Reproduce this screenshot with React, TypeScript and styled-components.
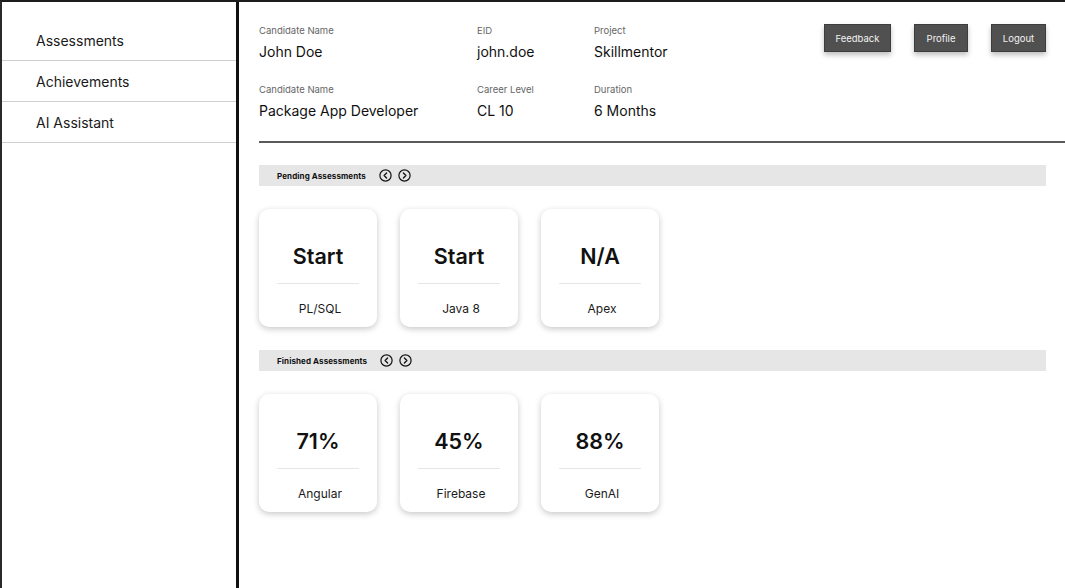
import React from "react";
import styled, { createGlobalStyle } from "styled-components";

const Global = createGlobalStyle`
  html, body { margin: 0; padding: 0; background: #fff; }
  body { font-family: Inter, "Noto Sans", sans-serif; color: #111; }
  * { box-sizing: border-box; }
`;

const Frame = styled.div`
  display: flex;
  width: 1065px;
  height: 588px;
  border-top: 2px solid #1c1c1c;
  border-left: 2px solid #2a2a2a;
  overflow: hidden;
`;

const Sidebar = styled.nav`
  width: 237px;
  flex-shrink: 0;
  border-right: 3px solid #111;
  padding-top: 18px;
  display: flex;
  flex-direction: column;
`;

const NavItem = styled.div`
  height: 41px;
  display: flex;
  align-items: center;
  padding-left: 34px;
  font-size: 14px;
  color: #1a1a1a;
  border-bottom: 1.5px solid #cfcfcf;
`;

const Main = styled.main`
  flex: 1;
  padding: 22px 19px 0 20px;
  display: flex;
  flex-direction: column;
`;

const Header = styled.div`
  display: flex;
  justify-content: space-between;
  align-items: flex-start;
`;

const InfoGrid = styled.div`
  display: grid;
  grid-template-columns: 218px 117px 150px;
  row-gap: 21px;
`;

const Field = styled.div`
  display: flex;
  flex-direction: column;
  gap: 4px;
`;

const Label = styled.span`
  font-size: 9.5px;
  line-height: 14px;
  color: #666;
`;

const Value = styled.span`
  font-size: 14px;
  line-height: 20px;
  color: #111;
`;

const Buttons = styled.div`
  display: flex;
  gap: 23px;
`;

const Btn = styled.button<{ $w: number }>`
  width: ${(p) => p.$w}px;
  height: 28px;
  border: 1px solid #3d3d3d;
  background: #505050;
  color: #f2f2f2;
  font-family: Inter, sans-serif;
  font-size: 9.5px;
  box-shadow: 0 3px 5px rgba(0, 0, 0, 0.25);
  padding: 0;
  cursor: pointer;
`;

const Rule = styled.hr`
  margin: 20px -19px 0 0;
  border: none;
  height: 2px;
  background: #5a5a5a;
`;

const SectionBar = styled.div<{ $top: number }>`
  margin-top: ${(p) => p.$top}px;
  height: 21px;
  background: #e6e6e6;
  display: flex;
  align-items: center;
  padding-left: 18px;
  gap: 13px;
`;

const SectionTitle = styled.span`
  font-size: 8px;
  font-weight: 700;
  color: #111;
  letter-spacing: 0.1px;
`;

const Arrows = styled.div`
  display: flex;
  gap: 6px;
  align-items: center;
`;

const CardRow = styled.div`
  margin-top: 23px;
  display: flex;
  gap: 23px;
`;

const Card = styled.div`
  width: 118px;
  height: 118px;
  border-radius: 10px;
  background: #fff;
  box-shadow: 0 2px 6px rgba(0, 0, 0, 0.22);
  display: flex;
  flex-direction: column;
  align-items: center;
  padding-top: 33px;
`;

const Big = styled.div`
  font-size: 21.5px;
  font-weight: 600;
  line-height: 28px;
  color: #111;
`;

const CardRule = styled.div`
  margin-top: 13px;
  width: 82px;
  height: 1px;
  background: #e6e6e6;
`;

const CardLabel = styled.div`
  margin-top: 17px;
  padding-left: 4px;
  font-size: 12px;
  line-height: 16px;
  color: #1a1a1a;
`;

const CircleArrow = ({ dir }: { dir: "l" | "r" }) => (
  <svg width="13" height="13" viewBox="0 0 13 13">
    <circle cx="6.5" cy="6.5" r="5.6" fill="none" stroke="#111" strokeWidth="1.2" />
    <path
      d={dir === "l" ? "M7.6 4 L5.1 6.5 L7.6 9" : "M5.4 4 L7.9 6.5 L5.4 9"}
      fill="none"
      stroke="#111"
      strokeWidth="1.3"
      strokeLinecap="round"
      strokeLinejoin="round"
    />
  </svg>
);

const pending = [
  { big: "Start", label: "PL/SQL" },
  { big: "Start", label: "Java 8" },
  { big: "N/A", label: "Apex" },
];
const finished = [
  { big: "71%", label: "Angular" },
  { big: "45%", label: "Firebase" },
  { big: "88%", label: "GenAI" },
];

type Item = { big: string; label: string };

const Section = ({ title, items, top }: { title: string; items: Item[]; top: number }) => (
  <>
    <SectionBar $top={top}>
      <SectionTitle>{title}</SectionTitle>
      <Arrows>
        <CircleArrow dir="l" />
        <CircleArrow dir="r" />
      </Arrows>
    </SectionBar>
    <CardRow>
      {items.map((c, i) => (
        <Card key={i}>
          <Big>{c.big}</Big>
          <CardRule />
          <CardLabel>{c.label}</CardLabel>
        </Card>
      ))}
    </CardRow>
  </>
);

export default function App() {
  return (
    <>
      <Global />
      <Frame>
        <Sidebar>
          <NavItem>Assessments</NavItem>
          <NavItem>Achievements</NavItem>
          <NavItem>AI Assistant</NavItem>
        </Sidebar>
        <Main>
          <Header>
            <InfoGrid>
              <Field>
                <Label>Candidate Name</Label>
                <Value>John Doe</Value>
              </Field>
              <Field>
                <Label>EID</Label>
                <Value>john.doe</Value>
              </Field>
              <Field>
                <Label>Project</Label>
                <Value>Skillmentor</Value>
              </Field>
              <Field>
                <Label>Candidate Name</Label>
                <Value>Package App Developer</Value>
              </Field>
              <Field>
                <Label>Career Level</Label>
                <Value>CL 10</Value>
              </Field>
              <Field>
                <Label>Duration</Label>
                <Value>6 Months</Value>
              </Field>
            </InfoGrid>
            <Buttons>
              <Btn $w={67}>Feedback</Btn>
              <Btn $w={54}>Profile</Btn>
              <Btn $w={55}>Logout</Btn>
            </Buttons>
          </Header>
          <Rule />
          <Section title="Pending Assessments" items={pending} top={22} />
          <Section title="Finished Assessments" items={finished} top={23} />
        </Main>
      </Frame>
    </>
  );
}
